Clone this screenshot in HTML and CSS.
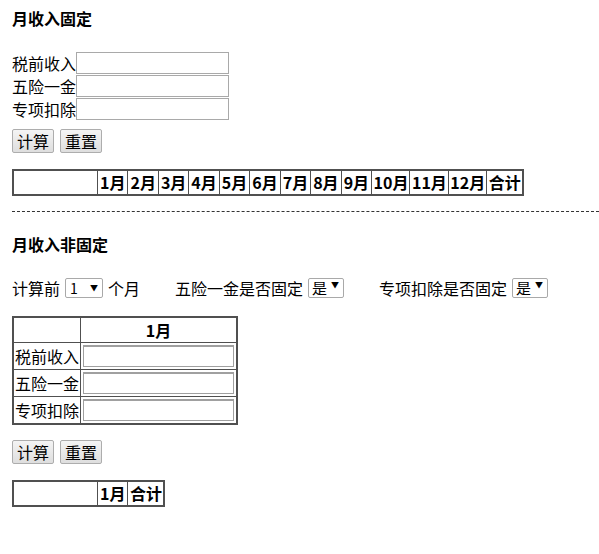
FILE: index.html
```html
<!DOCTYPE html>
<html lang="zh-CN">
<head>
<meta charset="utf-8">
<title>个税计算</title>
<link rel="stylesheet" href="styles.css">
</head>
<body>
<section class="part">
  <h3 class="title">月收入固定</h3>
  <div class="fields">
    <div class="field"><span class="lbl">税前收入</span><input class="txt" type="text"></div>
    <div class="field"><span class="lbl">五险一金</span><input class="txt" type="text"></div>
    <div class="field"><span class="lbl">专项扣除</span><input class="txt" type="text"></div>
  </div>
  <div class="btns"><button class="btn">计算</button><button class="btn">重置</button></div>
  <table class="grid result">
    <tr><th class="blank"></th><th class="m">1月</th><th class="m">2月</th><th class="m">3月</th><th class="m">4月</th><th class="m">5月</th><th class="m">6月</th><th class="m">7月</th><th class="m">8月</th><th class="m">9月</th><th class="mm">10月</th><th class="mm">11月</th><th class="mm">12月</th><th class="mm">合计</th></tr>
  </table>
</section>
<div class="divider"></div>
<section class="part">
  <h3 class="title title2">月收入非固定</h3>
  <div class="opts">
    <span class="opt">计算前 <span class="sel sel-n"><span class="val">1</span><span class="arr">▼</span></span> 个月</span>
    <span class="opt">五险一金是否固定 <span class="sel sel-y"><span class="val">是</span><span class="arr">▼</span></span></span>
    <span class="opt">专项扣除是否固定 <span class="sel sel-y"><span class="val">是</span><span class="arr">▼</span></span></span>
  </div>
  <table class="grid input-grid">
    <tr><th class="c1"></th><th class="c2">1月</th></tr>
    <tr><td class="c1">税前收入</td><td class="c2"><input class="txt cell" type="text"></td></tr>
    <tr><td class="c1">五险一金</td><td class="c2"><input class="txt cell" type="text"></td></tr>
    <tr><td class="c1">专项扣除</td><td class="c2"><input class="txt cell" type="text"></td></tr>
  </table>
  <div class="btns btns2"><button class="btn">计算</button><button class="btn">重置</button></div>
  <table class="grid result result2">
    <tr><th class="blank"></th><th class="m">1月</th><th class="mm">合计</th></tr>
  </table>
</section>
</body>
</html>
```
FILE: styles.css
```css
html, body { background: #fff; }
body {
  margin: 0;
  padding: 0 12px;
  font-family: "Noto Sans CJK SC", "Microsoft YaHei", sans-serif;
  font-size: 16px;
  line-height: 20px;
  color: #000;
}
.title {
  margin: 8px 0 0;
  font-size: 16px;
  line-height: 20px;
  font-weight: bold;
}
.title2 { margin-top: 22px; }
.fields { margin-top: 23px; }
.field {
  display: flex;
  align-items: center;
  height: 23px;
}
.lbl { line-height: 20px; }
.txt {
  box-sizing: border-box;
  width: 153px;
  height: 22px;
  margin: 0;
  padding: 0 2px;
  border: 1px solid #a9a9a9;
  font: inherit;
  background: #fff;
}
.btns {
  display: flex;
  gap: 6px;
  margin-top: 9px;
}
.btn {
  box-sizing: border-box;
  height: 24px;
  padding: 0 4px;
  margin: 0;
  font-family: inherit;
  font-size: 16px;
  line-height: 20px;
  color: #000;
  border: 1px solid #adadad;
  border-radius: 2px;
  background: linear-gradient(#f4f4f4, #dedede);
}
.grid {
  border-collapse: collapse;
  border: 2px solid #505050;
}
.grid th, .grid td {
  border: 1px solid #505050;
  padding: 0 1px;
  height: 23px;
  line-height: 23px;
  font-size: 16px;
  white-space: nowrap;
}
.grid th { font-weight: bold; }
.grid th.m { padding: 0 2px; }
.grid th.mm { padding: 0 1px 0 1.5px; }
.result { margin-top: 16px; }
.blank { width: 81px; }
.divider {
  margin: 15px -12px 0 0;
  border-top: 1px dashed #333;
}
.opts {
  display: flex;
  align-items: center;
  gap: 35px;
  margin-top: 22px;
  height: 24px;
}
.opt {
  display: inline-flex;
  align-items: center;
  gap: 5px;
}
.sel {
  box-sizing: border-box;
  display: inline-flex;
  align-items: center;
  justify-content: space-between;
  height: 20px;
  border: 1px solid #a9a9a9;
  border-radius: 2px;
  background: #fff;
  font-size: 14px;
  padding: 0 4px 0 4px;
}
.sel-n { width: 38px; }
.sel-y { width: 36px; padding-left: 3px; padding-right: 4px; }
.sel-y .val { font-size: 15px; }
.arr { font-size: 8px; line-height: 8px; }
.sel-y .arr { margin-top: -6px; }
.input-grid { margin-top: 16px; }
.input-grid .c1 { width: 64px; padding: 0 1px; }
.input-grid th.c2 { width: 151px; padding: 0 2px; }
.input-grid th { height: 24px; line-height: 24px; }
.input-grid td.c2 { padding: 2px; }
.input-grid td { height: 22px; line-height: 22px; }
.cell { display: block; width: 151px; height: 22px; border-color: #a0a0a0; border-width: 2px 1px 1px 1px; }
.btns2 { margin-top: 15px; }
.result2 { margin-top: 16px; }
```
